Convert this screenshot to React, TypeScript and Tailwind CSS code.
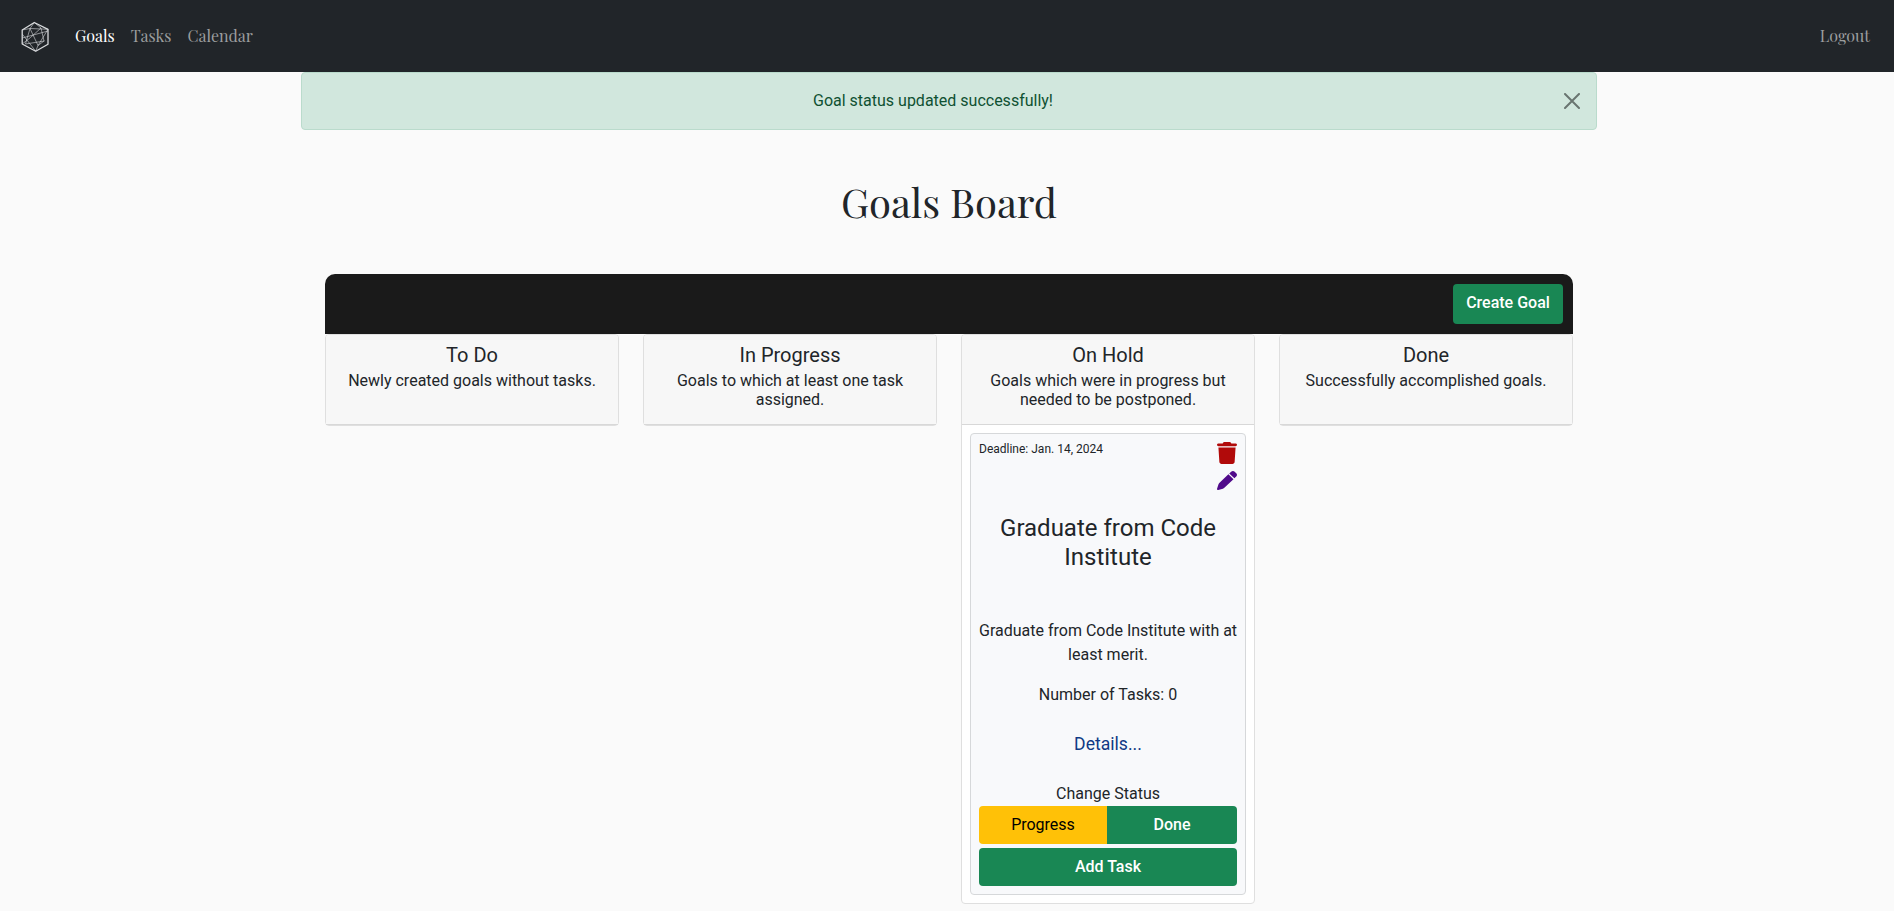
import React from "react";
import { FaPen, FaTrash } from "react-icons/fa6";

function Logo() {
  return (
    <svg className="h-8 w-7" viewBox="0 0 28 32" fill="none" stroke="#d9dbdd" strokeLinejoin="round">
      <path d="M13.3 2.500 27 9.300v14.900L14.700 31.200 1.200 24V10z" strokeWidth="1.300" />
      <path
        d="M13.3 2.500 9 8.500 4.500 24M9 8.500 17 25.500M9 8.500 27 9.300M1.200 10 9 8.500M13.300 2.500 20 8l3 13-6 4.500M20 8 9.500 17.500 1.200 24M1.200 18 27 11M4.500 24l19-3M1.200 14 14.700 31.200 17 25.500 27 9.300"
        strokeWidth="0.750"
        opacity="0.800"
      />
    </svg>
  );
}

type ColumnProps = { title: string; text: string; children?: React.ReactNode };

function Column({ title, text, children }: ColumnProps) {
  return (
    <section className="w-[294px] rounded border border-[#dfdfdf] bg-white text-center">
      <header className="h-[90px] rounded-t-[3px] border-b border-[#d8d8d8] bg-[#f7f7f7] px-4 pt-2">
        <h2 className="mb-1 text-xl leading-6">{title}</h2>
        <p className="text-base leading-[19.2px]">{text}</p>
      </header>
      {children}
    </section>
  );
}

function GoalCard() {
  return (
    <div className="p-2">
      <article className="flex h-[462px] flex-col rounded border border-[#d6d8da] bg-[#f8f9fb] p-2">
        <div className="flex h-[72px] items-start justify-between">
          <span className="text-xs leading-[14px]">Deadline: Jan. 14, 2024</span>
          <span className="flex flex-col items-end gap-[7px]">
            <FaTrash className="h-[22px] w-5 text-[#b10a0a]" preserveAspectRatio="none" />
            <FaPen className="h-[19px] w-5 text-[#500a8a]" preserveAspectRatio="none" />
          </span>
        </div>
        <h3 className="px-2 text-2xl leading-[28.8px]">Graduate from Code Institute</h3>
        <p className="mt-[47.4px] h-12 whitespace-nowrap leading-6">
          Graduate from Code Institute with at
          <br />
          least merit.
        </p>
        <p className="mt-4 leading-6">Number of Tasks: 0</p>
        <a className="mt-6 text-[17.6px] leading-[26px] text-[#0f3a85]">Details...</a>
        <p className="mt-auto leading-6">Change Status</p>
        <div className="flex h-[38px] shrink-0 overflow-hidden rounded">
          <button className="w-32 bg-[#ffc107] text-black">Progress</button>
          <button className="flex-1 bg-[#198754] font-medium text-white">Done</button>
        </div>
        <button className="mt-1 h-[38px] shrink-0 rounded bg-[#198754] font-medium text-white">Add Task</button>
      </article>
    </div>
  );
}

export default function App() {
  return (
    <div className="h-[911px] overflow-hidden bg-[#fafafa] font-['Roboto',sans-serif] text-base text-[#212529]">
      <nav className="flex h-[72px] items-center bg-[#212529] pl-[21px] pr-6 font-['Playfair_Display','Liberation_Serif',serif] text-base text-[#9b9d9e]">
        <Logo />
        <div className="ml-[26px] flex gap-4 pb-[1px]">
          <a className="text-white">Goals</a>
          <a>Tasks</a>
          <a>Calendar</a>
        </div>
        <a className="ml-auto pb-[1px]">Logout</a>
      </nav>
      <main className="ml-[301px] w-[1296px]">
        <div className="flex h-[58px] items-center rounded border border-[#badbcc] bg-[#d1e7dd] px-4 text-[#0f5132]">
          <p className="flex-1 pr-4 text-center leading-6">Goal status updated successfully!</p>
          <svg className="h-4 w-4" viewBox="0 0 16 16" fill="none" stroke="#697570" strokeWidth="2" strokeLinecap="round">
            <path d="m1 1 14 14M15 1 1 15" />
          </svg>
        </div>
        <h1 className="mt-[48px] text-center font-['Playfair_Display','Liberation_Serif',serif] text-[40px] leading-[48px]">Goals Board</h1>
        <div className="mx-6 mt-[48px] flex h-[60px] justify-end rounded-t-[10px] bg-[#1a1a1a] p-[10px]">
          <button className="h-10 w-[110px] rounded bg-[#198754] pb-[3px] font-medium text-white">Create Goal</button>
        </div>
        <div className="mx-6 flex items-start gap-6">
          <Column title="To Do" text="Newly created goals without tasks." />
          <Column title="In Progress" text="Goals to which at least one task assigned." />
          <Column title="On Hold" text="Goals which were in progress but needed to be postponed.">
            <GoalCard />
          </Column>
          <Column title="Done" text="Successfully accomplished goals." />
        </div>
      </main>
    </div>
  );
}
